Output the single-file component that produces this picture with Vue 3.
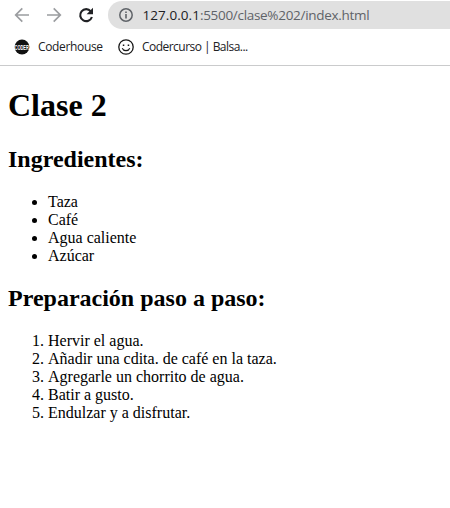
<script setup>
const ingredients = ['Taza', 'Café', 'Agua caliente', 'Azúcar']
const steps = [
  'Hervir el agua.',
  'Añadir una cdita. de café en la taza.',
  'Agregarle un chorrito de agua.',
  'Batir a gusto.',
  'Endulzar y a disfrutar.',
]
</script>

<template>
  <div class="window">
    <header class="chrome">
      <div class="toolbar">
        <svg class="nav" width="16" height="16" viewBox="0 0 16 16" fill="none" stroke="#9b9da0" stroke-width="1.7">
          <path d="M15 8H2M8.3 1.4 1.7 8l6.6 6.6" />
        </svg>
        <svg class="nav" width="16" height="16" viewBox="0 0 16 16" fill="none" stroke="#9b9da0" stroke-width="1.7">
          <path d="M1 8h13M7.7 1.4 14.3 8l-6.6 6.6" />
        </svg>
        <svg class="nav" width="16" height="16" viewBox="0 0 16 16">
          <path d="M12.8 4.3A6 6 0 1 0 13.9 10" fill="none" stroke="#202124" stroke-width="2.1" />
          <path d="M15 .8v6.4H8.6z" fill="#202124" />
        </svg>
        <div class="address">
          <svg width="14" height="14" viewBox="0 0 14 14">
            <circle cx="7" cy="7" r="6.2" fill="none" stroke="#5f6368" stroke-width="1.5" />
            <path d="M6.2 6.1h1.6v4.4H6.2zM6.2 3.4h1.6V5H6.2z" fill="#5f6368" />
          </svg>
          <span class="url"><span class="host">127.0.0.1</span>:5500/clase%202/index.html</span>
        </div>
      </div>
      <nav class="bookmarks">
        <a class="bookmark">
          <svg width="16" height="16" viewBox="0 0 16 16">
            <circle cx="8" cy="8" r="7.4" fill="#111" />
            <text class="logo" x="1" y="10.8" transform="scale(0.5 1)">CODER</text>
          </svg>
          <span class="label first">Coderhouse</span>
        </a>
        <a class="bookmark">
          <svg width="16" height="16" viewBox="0 0 16 16" fill="none" stroke="#181818">
            <circle cx="8" cy="8" r="7.2" stroke-width="1.3" />
            <path d="M4.2 9.2c1.4 3.2 6.2 3.2 7.6 0" stroke-width="1.1" />
            <path d="M4.8 6.2h1.5M9.7 6.2h1.5" stroke-width="1.4" />
          </svg>
          <span class="label second">Codercurso | Balsa...</span>
        </a>
      </nav>
    </header>
    <main class="page">
      <h1>Clase 2</h1>
      <h2>Ingredientes:</h2>
      <ul>
        <li v-for="item in ingredients" :key="item">{{ item }}</li>
      </ul>
      <h2>Preparación paso a paso:</h2>
      <ol>
        <li v-for="step in steps" :key="step">{{ step }}</li>
      </ol>
    </main>
  </div>
</template>

<style>
body {
  background: #fff;
}
</style>

<style scoped>
.window {
  height: 508px;
  overflow: hidden;
}
.chrome {
  box-sizing: border-box;
  height: 66px;
  border-bottom: 1px solid #cacbcc;
  font-family: "Open Sans", "Noto Sans", sans-serif;
}
.toolbar {
  display: flex;
  align-items: center;
  gap: 16px;
  height: 28px;
  padding: 1px 0 0 14px;
}
.nav {
  flex: none;
}
.address {
  flex: 1;
  display: flex;
  align-items: center;
  gap: 9.5px;
  height: 28px;
  margin-left: -2px;
  padding-left: 11px;
  border-radius: 14px 0 0 14px;
  background: #e0e0e0;
}
.url {
  font-size: 13.5px;
  line-height: 28px;
  letter-spacing: -0.3px;
  color: #5f6368;
  white-space: nowrap;
}
.host {
  letter-spacing: 0.05px;
  color: #202124;
}
.bookmarks {
  display: flex;
  gap: 16px;
  height: 36px;
  padding-left: 14px;
}
.bookmark {
  display: flex;
  align-items: center;
  gap: 8px;
}
.bookmark svg,
.address svg {
  flex: none;
}
.label {
  font-size: 12px;
  line-height: 16px;
  color: #202124;
  white-space: nowrap;
}
.first {
  width: 64px;
  letter-spacing: -0.35px;
}
.second {
  letter-spacing: -0.53px;
}
.logo {
  font: bold 8px "Liberation Sans", sans-serif;
  fill: #fff;
}
.page {
  padding: 0 8px;
  font: 16px "Liberation Serif", serif;
  line-height: normal;
  color: #000;
  display: flow-root;
}
h1 {
  font-size: 32px;
  margin: 21.44px 0;
}
h2 {
  font-size: 24px;
  margin: 19.92px 0;
}
ul,
ol {
  margin: 0;
  padding-left: 40px;
}
</style>
